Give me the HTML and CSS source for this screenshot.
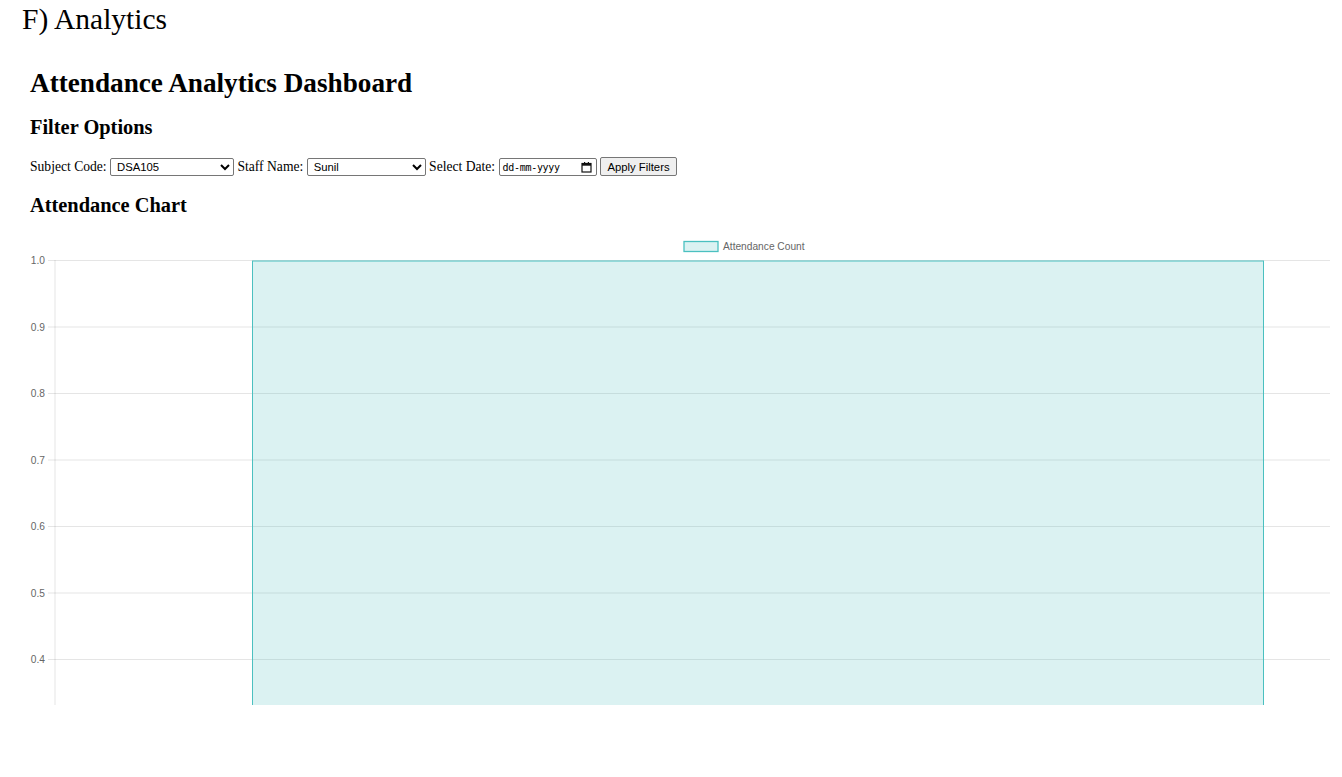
FILE: index.html
```html
<!DOCTYPE html>
<html lang="en">
<head>
<meta charset="utf-8">
<title>Attendance Analytics Dashboard</title>
<link rel="stylesheet" href="styles.css">
</head>
<body>
<div class="doc-title">F) Analytics</div>
<div class="page">
  <h1 class="h1">Attendance Analytics Dashboard</h1>
  <h2 class="h2">Filter Options</h2>
  <div class="filters">
    <label>Subject Code:</label>
    <select class="sel sel-subject"><option>DSA105</option></select>
    <label>Staff Name:</label>
    <select class="sel sel-staff"><option>Sunil</option></select>
    <label>Select Date:</label>
    <span class="date-input"><span class="date-text">dd-mm-yyyy</span><svg class="cal" width="11" height="11" viewBox="0 0 11 11"><rect x="1" y="1.5" width="9" height="8.5" fill="none" stroke="#111" stroke-width="1.2"/><rect x="1" y="1.5" width="9" height="2.2" fill="#111"/><rect x="3" y="0" width="1.2" height="2" fill="#111"/><rect x="6.8" y="0" width="1.2" height="2" fill="#111"/></svg></span>
    <button class="btn">Apply Filters</button>
  </div>
  <h2 class="h2 h2-chart">Attendance Chart</h2>
</div>
<div class="chart">
  <svg class="chart-svg" width="1342" height="473" viewBox="0 232 1342 473">
    <rect x="684" y="241.5" width="34" height="10" fill="rgba(75,192,192,0.2)" stroke="rgb(75,192,192)" stroke-width="1.3"/>
    <text x="723" y="249.8" class="legend">Attendance Count</text>
    <g stroke="rgba(0,0,0,0.1)" stroke-width="1">
      <line x1="48" y1="260.5" x2="1330" y2="260.5"/>
      <line x1="48" y1="327" x2="1330" y2="327"/>
      <line x1="48" y1="393.5" x2="1330" y2="393.5"/>
      <line x1="48" y1="460" x2="1330" y2="460"/>
      <line x1="48" y1="526.5" x2="1330" y2="526.5"/>
      <line x1="48" y1="593" x2="1330" y2="593"/>
      <line x1="48" y1="659.5" x2="1330" y2="659.5"/>
      <line x1="55" y1="260" x2="55" y2="706"/>
    </g>
    <g class="tick">
      <text x="45" y="264">1.0</text>
      <text x="45" y="330.5">0.9</text>
      <text x="45" y="397">0.8</text>
      <text x="45" y="463.5">0.7</text>
      <text x="45" y="530">0.6</text>
      <text x="45" y="596.5">0.5</text>
      <text x="45" y="663">0.4</text>
    </g>
    <rect x="252.5" y="261" width="1011" height="460" fill="rgba(75,192,192,0.2)" stroke="rgb(75,192,192)" stroke-width="1"/>
  </svg>
</div>
</body>
</html>
```
FILE: styles.css
```css
html, body {
  margin: 0;
  padding: 0;
  background: #fff;
  color: #000;
  font-family: "Liberation Serif", "Times New Roman", serif;
}
.doc-title {
  font-size: 29.5px;
  line-height: 1.107;
  padding: 3px 0 0 22px;
}
.page {
  padding-left: 30px;
}
.h1 {
  font-size: 27.2px;
  font-weight: bold;
  line-height: 1.107;
  margin: 32px 0 18.5px;
}
.h2 {
  font-size: 20.4px;
  font-weight: bold;
  line-height: 1.107;
  margin: 0 0 17px;
}
.h2-chart {
  margin: 17px 0 16px;
}
.filters {
  font-size: 13.6px;
  line-height: 21px;
  height: 21px;
  white-space: nowrap;
}
.sel {
  font-family: "Liberation Sans", Arial, sans-serif;
  font-size: 11.3px;
  height: 18px;
  padding: 0 0 0 2px;
  border: 1px solid #767676;
  border-radius: 2px;
  background: #fff;
  color: #000;
  box-sizing: border-box;
}
.sel-subject { width: 124px; }
.sel-staff { width: 119px; }
.date-input {
  display: inline-flex;
  align-items: center;
  justify-content: space-between;
  box-sizing: border-box;
  width: 98px;
  height: 18px;
  padding: 0 4px 0 3px;
  border: 1px solid #767676;
  border-radius: 2px;
  background: #fff;
}
.date-text {
  font-family: "DejaVu Sans Mono", "Liberation Mono", monospace;
  font-size: 10px;
  line-height: 15px;
  letter-spacing: -0.3px;
}
.cal { display: block; }
.btn {
  font-family: "Liberation Sans", Arial, sans-serif;
  font-size: 11.3px;
  height: 19px;
  width: 77px;
  padding: 0;
  border: 1px solid #767676;
  border-radius: 2px;
  background: #efefef;
  color: #000;
  box-sizing: border-box;
}
.chart {
  height: 545px;
}
.chart-svg {
  display: block;
}
.legend {
  font-family: "Liberation Sans", Arial, sans-serif;
  font-size: 10.2px;
  fill: #666;
}
.tick text {
  font-family: "Liberation Sans", Arial, sans-serif;
  font-size: 10.2px;
  fill: #666;
  text-anchor: end;
}
```
